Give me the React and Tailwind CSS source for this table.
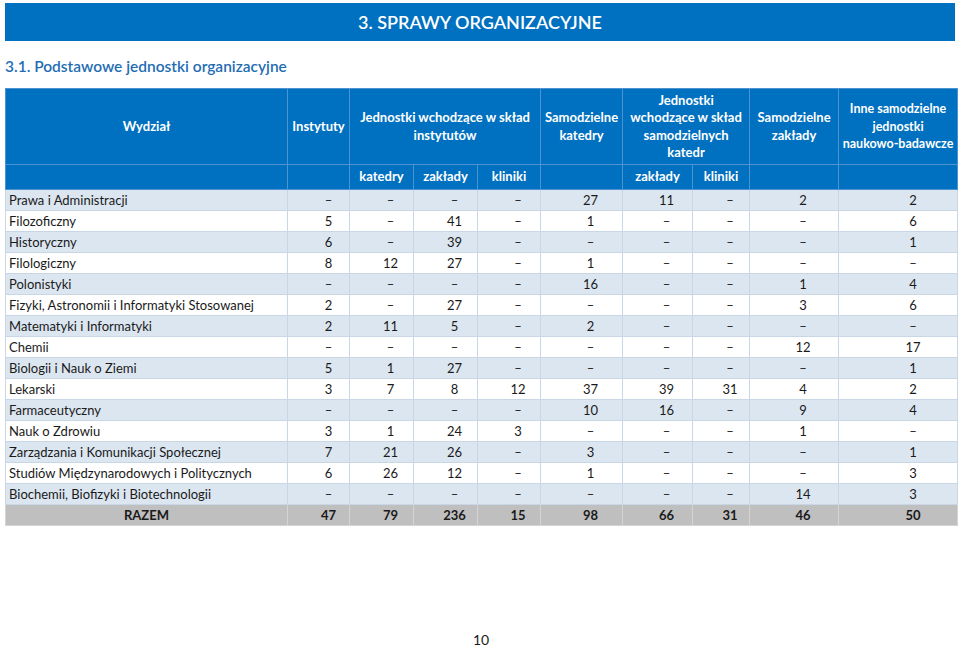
import React from 'react';

const rows = [
  ['Prawa i Administracji', '–', '–', '–', '–', '27', '11', '–', '2', '2'],
  ['Filozoficzny', '5', '–', '41', '–', '1', '–', '–', '–', '6'],
  ['Historyczny', '6', '–', '39', '–', '–', '–', '–', '–', '1'],
  ['Filologiczny', '8', '12', '27', '–', '1', '–', '–', '–', '–'],
  ['Polonistyki', '–', '–', '–', '–', '16', '–', '–', '1', '4'],
  ['Fizyki, Astronomii i Informatyki Stosowanej', '2', '–', '27', '–', '–', '–', '–', '3', '6'],
  ['Matematyki i Informatyki', '2', '11', '5', '–', '2', '–', '–', '–', '–'],
  ['Chemii', '–', '–', '–', '–', '–', '–', '–', '12', '17'],
  ['Biologii i Nauk o Ziemi', '5', '1', '27', '–', '–', '–', '–', '–', '1'],
  ['Lekarski', '3', '7', '8', '12', '37', '39', '31', '4', '2'],
  ['Farmaceutyczny', '–', '–', '–', '–', '10', '16', '–', '9', '4'],
  ['Nauk o Zdrowiu', '3', '1', '24', '3', '–', '–', '–', '1', '–'],
  ['Zarządzania i Komunikacji Społecznej', '7', '21', '26', '–', '3', '–', '–', '–', '1'],
  ['Studiów Międzynarodowych i Politycznych', '6', '26', '12', '–', '1', '–', '–', '–', '3'],
  ['Biochemii, Biofizyki i Biotechnologii', '–', '–', '–', '–', '–', '–', '–', '14', '3'],
];

const totals = ['47', '79', '236', '15', '98', '66', '31', '46', '50'];

const widths = ['w-[282px]', 'w-[62px]', 'w-[64px]', 'w-[64px]', 'w-[63px]', 'w-[82px]', 'w-[70px]', 'w-[57px]', 'w-[89px]', 'w-[119px]'];

const pads = ['', 'pl-[20px]', 'pl-[18px]', 'pl-[18px]', 'pl-[18px]', 'pl-[18px]', 'pl-[18px]', 'pl-[18px]', 'pl-[18px]', 'pl-[30px]'];

const th = 'border border-[#4d93d2] text-white font-bold text-center align-middle p-0 whitespace-nowrap';

export default function App() {
  return (
    <div className="w-[960px] h-[647px] bg-white relative font-['Lato','Open_Sans',sans-serif] text-[#1a1a1a]">
      <div className="mx-[5px] pt-[3px]">
        <div className="h-[38px] bg-[#0070c0] flex items-center justify-center text-white text-[18px] font-semibold">
          3. SPRAWY ORGANIZACYJNE
        </div>
        <h2 className="mt-[15px] text-[15.5px] font-semibold text-[#1f6db3] leading-[20px]">
          3.1. Podstawowe jednostki organizacyjne
        </h2>
        <table className="mt-[12px] border-collapse table-fixed w-[952px] text-[13px]">
          <colgroup>
            {widths.map((w, i) => (
              <col key={i} className={w} />
            ))}
          </colgroup>
          <thead className="bg-[#0070c0] leading-[17.5px]">
            <tr className="h-[76px]">
              <th className={th}>Wydział</th>
              <th className={th}>Instytuty</th>
              <th className={th} colSpan={3}>
                Jednostki wchodzące w skład
                <br />
                instytutów
              </th>
              <th className={th}>
                Samodzielne
                <br />
                katedry
              </th>
              <th className={th} colSpan={2}>
                Jednostki
                <br />
                wchodzące w skład
                <br />
                samodzielnych
                <br />
                katedr
              </th>
              <th className={th}>
                Samodzielne
                <br />
                zakłady
              </th>
              <th className={th + ' text-[12.5px]'}>
                Inne samodzielne
                <br />
                jednostki
                <br />
                naukowo-badawcze
              </th>
            </tr>
            <tr className="h-[25px]">
              <th className={th}></th>
              <th className={th}></th>
              <th className={th}>katedry</th>
              <th className={th}>zakłady</th>
              <th className={th}>kliniki</th>
              <th className={th}></th>
              <th className={th}>zakłady</th>
              <th className={th}>kliniki</th>
              <th className={th}></th>
              <th className={th}></th>
            </tr>
          </thead>
          <tbody className="leading-[19px]">
            {rows.map((r, ri) => (
              <tr key={ri} className={ri % 2 === 0 ? 'h-[21px] bg-[#dce6f1]' : 'h-[21px] bg-white'}>
                {r.map((c, ci) => (
                  <td
                    key={ci}
                    className={
                      ci === 0
                        ? 'border border-[#c9d6e6] pl-[3px] py-0 whitespace-nowrap'
                        : 'border border-[#c9d6e6] py-0 text-center ' + pads[ci]
                    }
                  >
                    {c}
                  </td>
                ))}
              </tr>
            ))}
            <tr className="h-[21px] bg-[#bfbfbf] font-bold">
              <td className="border border-[#d4d4d4] py-0 text-center">RAZEM</td>
              {totals.map((t, i) => (
                <td key={i} className={'border border-[#d4d4d4] py-0 text-center ' + pads[i + 1]}>
                  {t}
                </td>
              ))}
            </tr>
          </tbody>
        </table>
      </div>
      <div className="absolute left-0 right-0 top-[632px] text-center text-[14px] leading-[15px] pl-[2px]">10</div>
    </div>
  );
}
